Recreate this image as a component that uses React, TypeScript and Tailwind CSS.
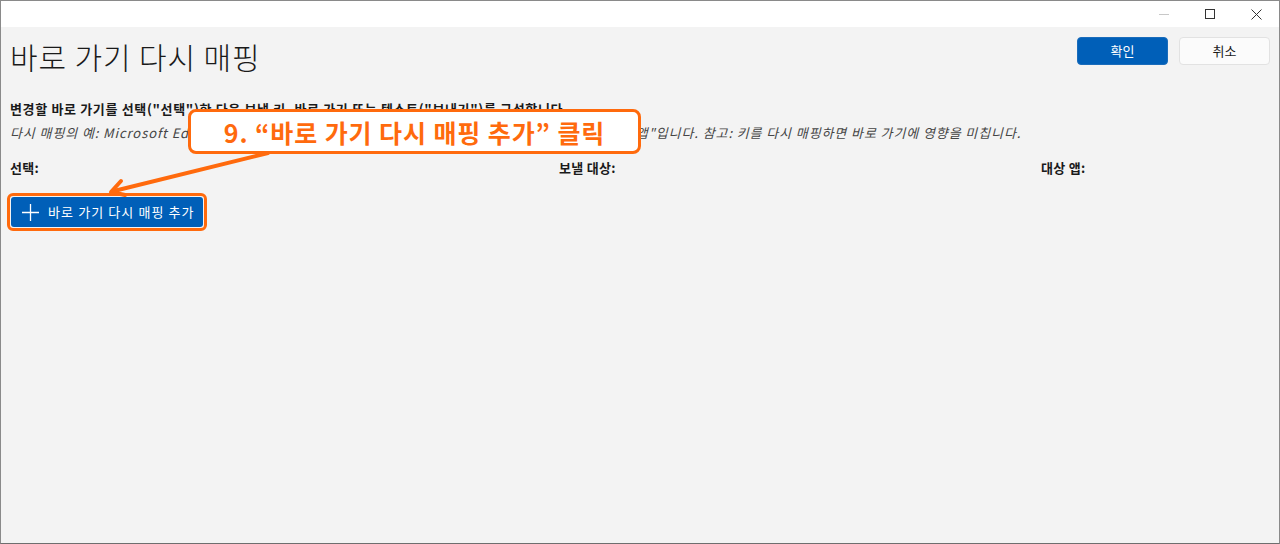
import React from "react";

const KR = { fontFamily: '"Noto Sans CJK KR", "Noto Sans", sans-serif' };

export default function App() {
  return (
    <div className="relative w-[1280px] h-[544px] overflow-hidden bg-[#f3f3f3]" style={KR}>
      <div className="flex flex-col h-full border border-[#8a8a8a] border-b-[#6e6e6e]">
        {/* title bar */}
        <div className="h-[26px] bg-white flex items-center justify-end shrink-0">
          <div className="w-[46px] h-full flex items-center justify-center">
            <div className="w-[10px] h-px bg-[#c8c8c8]" />
          </div>
          <div className="w-[46px] h-full flex items-center justify-center">
            <div className="w-[10px] h-[10px] border border-[#333]" />
          </div>
          <div className="w-[46px] h-full flex items-center justify-center">
            <svg width="11" height="11" viewBox="0 0 11 11">
              <path d="M0.5 0.5 L10.5 10.5 M10.5 0.5 L0.5 10.5" stroke="#333" strokeWidth="1" />
            </svg>
          </div>
        </div>

        {/* content */}
        <div className="flex-1 px-[9px] text-[#1a1a1a]">
          <div className="flex items-start justify-between pt-[10px]">
            <h1 className="text-[30px] leading-[36px] font-light tracking-[0.9px] mt-[1px]">바로 가기 다시 매핑</h1>
            <div className="flex gap-[11px]">
              <button className="w-[91px] h-[28px] rounded-[4px] bg-[#005fb8] text-white text-[13px] border border-[#1a6cbb]">확인</button>
              <button className="w-[91px] h-[28px] rounded-[4px] bg-[#fbfbfb] text-[#1a1a1a] text-[13px] border border-[#e2e2e2]">취소</button>
            </div>
          </div>

          <p className="mt-[27px] text-[13px] leading-[16px] font-bold tracking-[0.65px] whitespace-nowrap">
            변경할 바로 가기를 선택("선택")한 다음 보낼 키, 바로 가기 또는 텍스트("보내기")를 구성합니다.
          </p>
          <p className="mt-[8px] text-[13px] leading-[16px] italic text-[#444] tracking-[0.9px] whitespace-nowrap">
            다시 매핑의 예: Microsoft Edge에서만 "Ctrl+M"을 "Ctrl+W"로 다시 매핑하는 경우, "대상 앱"은 "Edge 앱"입니다. 참고: 키를 다시 매핑하면 바로 가기에 영향을 미칩니다.
          </p>

          <div className="mt-[19px] flex text-[13px] leading-[16px] font-bold tracking-[0.3px]">
            <div className="w-[549px]">선택:</div>
            <div className="w-[482px]">보낼 대상:</div>
            <div>대상 앱:</div>
          </div>

          <div className="mt-[17px] inline-block rounded-[6px] border-[3px] border-[#ff6a0d] p-px -ml-[3px]">
            <button className="h-[30px] w-[192px] rounded-[3px] bg-[#005fb8] text-white text-[13px] flex items-center pl-[11px] gap-[9px]">
              <svg width="17" height="17" viewBox="0 0 17 17">
                <path d="M8.5 0 V17 M0 8.5 H17" stroke="white" strokeWidth="1.3" />
              </svg>
              <span className="tracking-[1.1px]">바로 가기 다시 매핑 추가</span>
            </button>
          </div>
        </div>
      </div>

      {/* annotation arrow */}
      <svg className="absolute left-0 top-0 pointer-events-none" width="1280" height="544">
        <path d="M268 153 L114 191" stroke="#ff6a0d" strokeWidth="4" strokeLinecap="round" />
        <path d="M121 181 L111 192 L125 195" fill="none" stroke="#ff6a0d" strokeWidth="4" strokeLinecap="round" strokeLinejoin="round" />
      </svg>

      {/* callout */}
      <div className="absolute left-[188px] top-[109px] w-[453px] h-[45px] bg-white border-[3px] border-[#ff6a0d] rounded-[8px] flex items-center justify-center">
        <span className="text-[25px] leading-[30px] font-bold text-[#ff6a0d] tracking-[0.9px]">9. “바로 가기 다시 매핑 추가” 클릭</span>
      </div>
    </div>
  );
}
